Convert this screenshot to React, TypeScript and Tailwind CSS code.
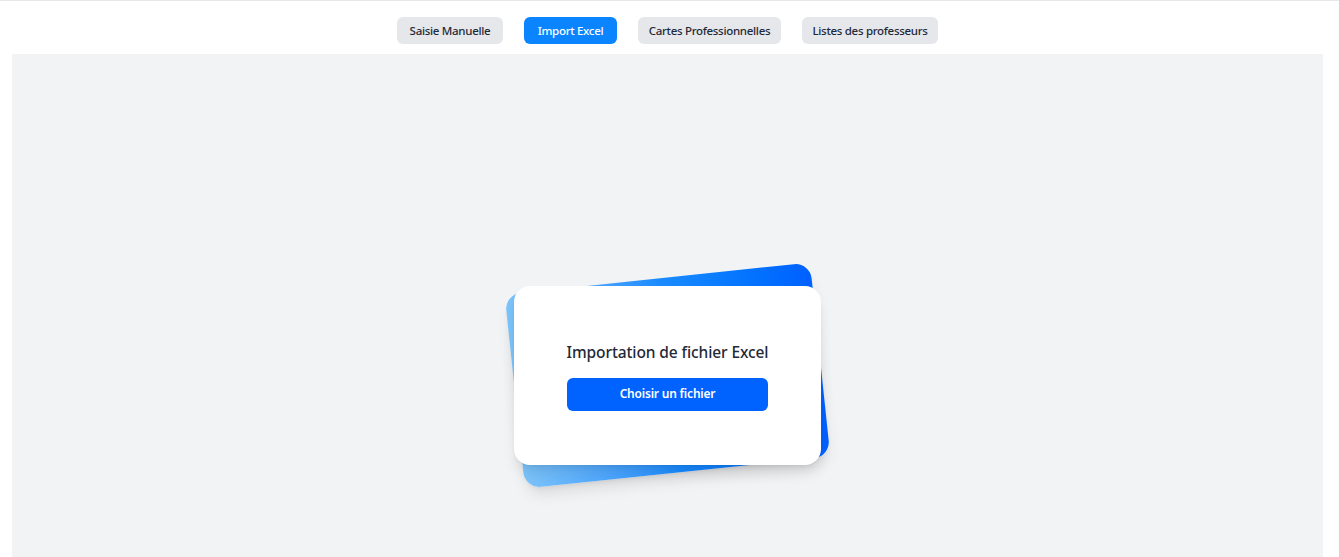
import { useState } from "react";

const tabs = [
  { name: "Saisie Manuelle", width: "w-[106px]" },
  { name: "Import Excel", width: "w-[93px]" },
  { name: "Cartes Professionnelles", width: "w-[143px]" },
  { name: "Listes des professeurs", width: "w-[136px]" },
];

export default function App() {
  const [active, setActive] = useState("Import Excel");

  return (
    <div className="min-h-screen bg-white border-t border-gray-200 font-['Noto_Sans',sans-serif]">
      {/* Tabs */}
      <div className="flex justify-center gap-[21px] pt-4 pb-[10px] pr-1">
        {tabs.map((tab) => (
          <button
            key={tab.name}
            onClick={() => setActive(tab.name)}
            className={
              active === tab.name
                ? `${tab.width} h-[27px] rounded-md bg-[#0a84ff] text-white text-[11.5px] font-medium tracking-[-0.3px]`
                : `${tab.width} h-[27px] rounded-md bg-[#e5e7eb] text-[#1f2937] text-[11.5px] font-medium tracking-[-0.3px]`
            }
          >
            {tab.name}
          </button>
        ))}
      </div>

      {/* Panel */}
      <div className="ml-3 mr-4 h-[642px] bg-[#f2f3f5] flex items-center justify-center">
        <div className="relative w-[307px] h-[179px]">
          <div className="absolute left-0 right-0 top-[-8px] bottom-[-8px] rounded-2xl -rotate-6 bg-gradient-to-r from-[#7cc4fa] via-[#1a8cff] to-[#0060ff] shadow-lg" />
          <div className="relative h-full rounded-2xl bg-white shadow-lg flex flex-col items-center justify-center">
            <h2 className="text-[15.5px] leading-6 text-[#1f2937] font-medium tracking-[-0.1px]">Importation de fichier Excel</h2>
            <button className="mt-[14px] w-[201px] h-[33px] rounded-md bg-[#0062ff] text-white text-[12px] font-semibold tracking-[-0.2px]">
              Choisir un fichier
            </button>
          </div>
        </div>
      </div>
    </div>
  );
}
